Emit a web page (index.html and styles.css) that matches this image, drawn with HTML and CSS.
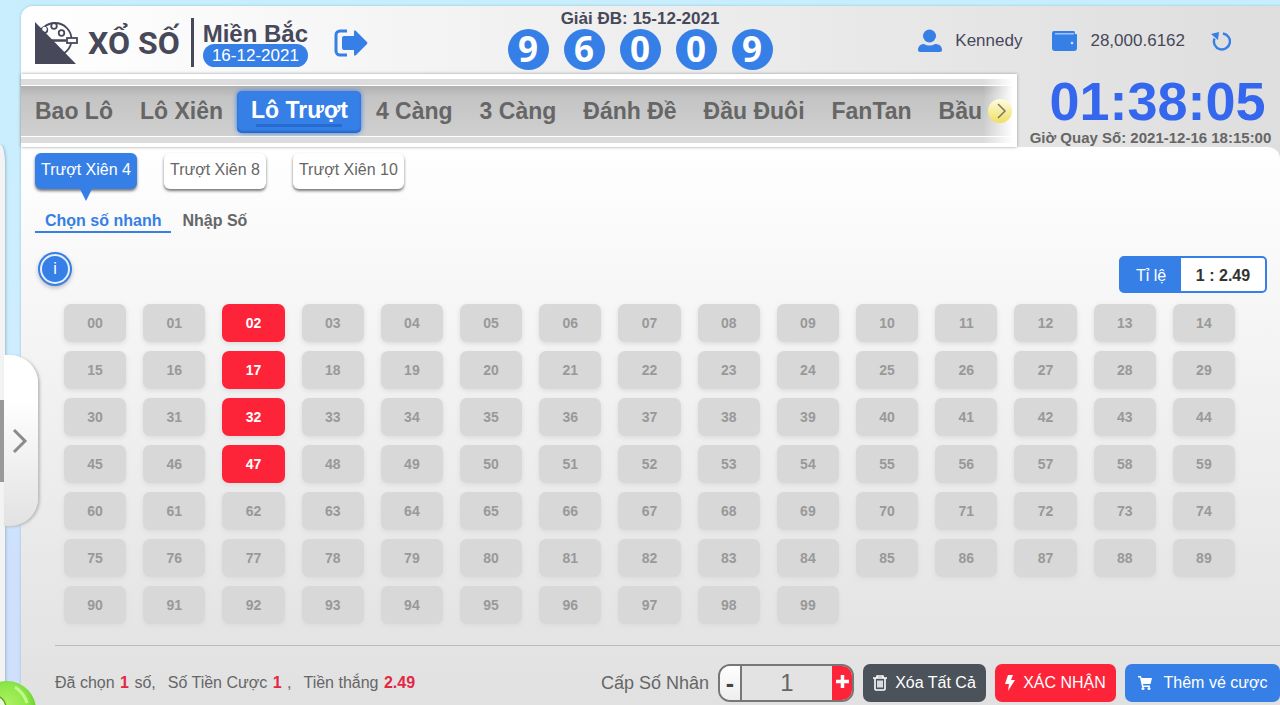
FILE: index.html
```html
<!DOCTYPE html>
<html lang="vi">
<head>
  <meta charset="utf-8">
  <title>Xổ Số Miền Bắc</title>
  <link rel="stylesheet" href="styles.css">
</head>
<body>
  <aside class="drawer">
    <div class="drawer-edge"></div>
    <button class="drawer-handle" aria-label="Mở menu">
      <svg width="16" height="26" viewBox="0 0 16 26"><path d="M2 2l11 11L2 24" fill="none" stroke="#8b8b8b" stroke-width="3"/></svg>
    </button>
    <svg class="green-ball" width="60" height="60" viewBox="0 0 60 60">
      <defs>
        <radialGradient id="ball" cx="50%" cy="40%" r="60%">
          <stop offset="0" stop-color="#b0f060"/>
          <stop offset="0.6" stop-color="#8be648"/>
          <stop offset="1" stop-color="#55c01c"/>
        </radialGradient>
      </defs>
      <circle cx="30" cy="30" r="29" fill="url(#ball)"/>
      <path d="M38 7c6 4 10 9 12 16" fill="none" stroke="#c4f790" stroke-width="3"/>
      <circle cx="16" cy="28" r="13" fill="#eaf8dc" stroke="#5aa82c" stroke-width="1.500"/>
    </svg>
  </aside>

  <main class="panel">
    <header class="header">
      <div class="brand">
        <svg width="43" height="42" viewBox="0 0 43 42">
          <g fill="#fff" stroke="#474859" stroke-width="1.800">
            <circle cx="20" cy="17.500" r="16.500"/>
            <circle cx="19" cy="4" r="2.800"/>
            <circle cx="9.500" cy="8" r="2.800"/>
            <circle cx="26.500" cy="11" r="2.800"/>
            <path d="M17 18.500h14" stroke-width="2.500"/>
            <rect x="32" y="16" width="10" height="5"/>
          </g>
          <path d="M0 0l41 42H0z" fill="#474859"/>
          <circle cx="9.500" cy="7" r="2.300" fill="#fff"/>
        </svg>
        <span class="brand-name">XỔ SỐ</span>
        <div class="region">
          <strong>Miền Bắc</strong>
          <span class="region-date">16-12-2021</span>
        </div>
        <a href="#" class="exit" aria-label="Thoát">
          <svg width="34" height="28" viewBox="0 0 34 28"><path d="M13 2H6a4 4 0 0 0-4 4v16a4 4 0 0 0 4 4h7" fill="none" stroke="#367fe6" stroke-width="3"/><path d="M8 9q0-2 2-2h10V3q0-3 2-1l11 11q1 1 0 2L22 26q-2 2-2-1v-4H10q-2 0-2-2z" fill="#367fe6"/></svg>
        </a>
      </div>

      <div class="result">
        <div class="result-title">Giải ĐB: 15-12-2021</div>
        <div class="balls">
          <span>9</span><span>6</span><span>0</span><span>0</span><span>9</span>
        </div>
      </div>

      <div class="account">
        <svg width="25" height="25" viewBox="0 0 25 25" fill="#367fe6"><circle cx="12.500" cy="7" r="6.500"/><path d="M1 21c0-4 3-6 6-6 4 2 7 2 11 0 4 0 7 2 7 6 0 1-1 2-2 2H3c-1 0-2-1-2-2z"/></svg>
        <span class="user">Kennedy</span>
        <svg width="25" height="22" viewBox="0 0 25 22"><path d="M2 1h20q1 0 1 3h1q1 0 1 1v13q0 3-3 3H3q-3 0-3-3V3q0-2 2-2z" fill="#367fe6"/><path d="M3 3h19v1.500H3z" fill="#9cc4fa"/><circle cx="20" cy="13" r="1.300" fill="#cfe2ff"/></svg>
        <span class="balance">28,000.6162</span>
        <button class="refresh" aria-label="Tải lại">
          <svg width="20" height="20" viewBox="0 0 20 20"><path d="M12 2.500a8 8 0 1 1-8.500 5" fill="none" stroke="#367fe6" stroke-width="2.400"/><path d="M0 3l8-2-1 8z" fill="#367fe6"/></svg>
        </button>
      </div>
    </header>

    <div class="games">
      <nav class="game-nav">
        <div class="game-list">
          <a href="#">Bao Lô</a>
          <a href="#">Lô Xiên</a>
          <a href="#" class="active">Lô Trượt</a>
          <a href="#">4 Càng</a>
          <a href="#">3 Càng</a>
          <a href="#">Đánh Đề</a>
          <a href="#">Đầu Đuôi</a>
          <a href="#">FanTan</a>
          <a href="#">Bầu</a>
        </div>
        <button class="next" aria-label="Tiếp">
          <svg width="10" height="16" viewBox="0 0 10 16"><path d="M1 1l7 7-7 7" fill="none" stroke="#777" stroke-width="1.500"/></svg>
        </button>
      </nav>
      <div class="clock">
        <div class="clock-time">01:38:05</div>
        <div class="clock-draw">Giờ Quay Số: 2021-12-16 18:15:00</div>
      </div>
    </div>

    <section class="content">
      <div class="types">
        <button class="active">Trượt Xiên 4</button>
        <button>Trượt Xiên 8</button>
        <button>Trượt Xiên 10</button>
      </div>

      <div class="modes">
        <a href="#" class="active">Chọn số nhanh</a>
        <a href="#">Nhập Số</a>
      </div>

      <div class="info-row">
        <button class="info" aria-label="Thông tin"><span>i</span></button>
        <div class="rate">
          <span class="rate-label">Tỉ lệ</span>
          <span class="rate-value">1 : 2.49</span>
        </div>
      </div>

      <div class="numbers" id="numbers"></div>

      <footer class="bet-bar">
        <p class="summary">
          <span>Đã chọn <b>1</b> số,</span>
          <span>Số Tiền Cược <b>1</b> ,</span>
          <span>Tiền thắng <b>2.49</b></span>
        </p>
        <label class="multiplier-label" for="multiplier">Cấp Số Nhân</label>
        <div class="stepper">
          <button class="minus" aria-label="Giảm">-</button>
          <input id="multiplier" type="text" value="1">
          <button class="plus" aria-label="Tăng">
            <svg width="13" height="13" viewBox="0 0 13 13"><path d="M6.500 0v13M0 6.500h13" stroke="#fff" stroke-width="3.500"/></svg>
          </button>
        </div>
        <button class="action clear">
          <svg width="14" height="16" viewBox="0 0 14 16" fill="none" stroke="#fff" stroke-width="1.600"><path d="M0 3h14M4 3V1h6v2M2 3v11q0 1 1 1h8q1 0 1-1V3M5 5.500v7M7 5.500v7M9 5.500v7"/></svg>
          Xóa Tất Cả
        </button>
        <button class="action confirm">
          <svg width="10" height="16" viewBox="0 0 10 16" fill="#fff"><path d="M3 0h5L6 5h4L3 16l1-7H0z"/></svg>
          XÁC NHẬN
        </button>
        <button class="action add">
          <svg width="14" height="14" viewBox="0 0 14 14" fill="#fff"><path d="M0 0h3l.5 2H14l-1.500 6H5l.3 1.500H12V11H4L2 1.500H0z"/><circle cx="5" cy="12.500" r="1.500"/><circle cx="11" cy="12.500" r="1.500"/></svg>
          Thêm vé cược
        </button>
      </footer>
    </section>
  </main>

  <script>
    const picked = [2, 17, 32, 47];
    const numbers = document.getElementById('numbers');

    for (let i = 0; i < 100; i++) {
      const button = document.createElement('button');
      button.textContent = String(i).padStart(2, '0');
      if (picked.includes(i)) {
        button.className = 'picked';
      }
      button.addEventListener('click', () => button.classList.toggle('picked'));
      numbers.appendChild(button);
    }
  </script>
</body>
</html>
```
FILE: styles.css
```css
* {
  box-sizing: border-box;
}
body {
  margin: 0;
  min-height: 100vh;
  display: flex;
  overflow: hidden;
  font-family: "Liberation Sans", Arial, sans-serif;
  font-size: 16px;
  color: #666;
  background: linear-gradient(#c8eefe, #cfedff 60%, #cfdffc 80%);
}
button,
input {
  font-family: inherit;
  font-size: inherit;
  border: none;
  padding: 0;
}
button {
  cursor: pointer;
}
a {
  color: inherit;
  text-decoration: none;
}
svg {
  flex: none;
}

/* left drawer */
.drawer {
  position: relative;
  flex: none;
  width: 21px;
}
.drawer-edge {
  position: absolute;
  top: 145px;
  bottom: 0;
  left: 0;
  width: 5px;
  background: #f3f3f3;
  border-top-right-radius: 6px 20px;
  box-shadow: 1px 0 3px #9bb9cc;
}
.drawer-handle {
  position: absolute;
  z-index: 2;
  top: 355px;
  left: 4px;
  width: 34px;
  height: 171px;
  border-radius: 0 28px 28px 0;
  background: linear-gradient(#fff 25%, #e2e2e2);
  box-shadow: 2px 1px 3px #bbb;
  display: flex;
  align-items: center;
  padding-left: 8px;
}
.drawer-handle::before {
  content: "";
  position: absolute;
  left: -4px;
  top: 45px;
  width: 4px;
  height: 82px;
  background: #999;
}
.green-ball {
  position: absolute;
  z-index: 2;
  left: -23px;
  bottom: -35px;
}

/* header */
.panel {
  flex: 1;
  min-width: 0;
  margin-top: 6px;
  display: flex;
  flex-direction: column;
  border-top-left-radius: 12px;
  background: linear-gradient(90deg, #fff, #f1f1f1 40%, #dedede);
  box-shadow: 0 0 3px #9bc0d2;
}
.header {
  height: 68px;
  padding: 0 35px 0 14px;
  display: grid;
  grid-template-columns: 1fr auto 1fr;
}
.brand {
  display: flex;
  align-items: center;
  padding-top: 5px;
  color: #474859;
}
.brand-name {
  margin-left: 10px;
  font: 700 32px/40px Roboto, sans-serif;
}
.region {
  margin-left: 11px;
  padding: 6px 0 0 9px;
  border-left: 3px solid #474859;
  display: flex;
  flex-direction: column;
  align-items: center;
}
.region strong {
  font-size: 24px;
  line-height: 20px;
}
.region-date {
  width: 100%;
  border-radius: 12px;
  background: #367fe6;
  color: #fff;
  font-size: 17px;
  line-height: 23px;
  text-align: center;
}
.exit {
  margin-left: 26px;
}
.exit svg {
  display: block;
}
.result {
  padding-top: 3px;
  text-align: center;
}
.result-title {
  color: #474859;
  font-size: 17px;
  font-weight: bold;
  line-height: 20px;
}
.balls {
  display: flex;
  gap: 15px;
}
.balls span {
  width: 41px;
  height: 41px;
  border-radius: 50%;
  background: #367fe6;
  color: #fff;
  font: 700 35px/40px "Noto Sans", sans-serif;
}
.account {
  display: flex;
  align-items: center;
  justify-content: flex-end;
  padding: 2px 14px 0 0;
  color: #474859;
  font-size: 17px;
}
.user {
  margin: 0 30px 0 13px;
}
.balance {
  margin: 0 26px 0 13px;
}
.refresh {
  background: none;
}
.refresh svg {
  display: block;
}

/* game menu and clock */
.games {
  display: flex;
}
.game-nav {
  position: relative;
  flex: 1;
  min-width: 0;
  padding: 5px 4px 4px 0;
  background: #fff;
  box-shadow: 0 0 3px #999;
}
.game-list {
  display: flex;
  align-items: center;
  height: 64px;
  overflow: hidden;
  background: linear-gradient(#dcdcdc 6px, #fff 6px, #fff 7px, #b0b0b0 7px, #c4c4c4 18px, #d0d0d0 57px, #fff 57px, #fff 58px, #dcdcdc 58px);
}
.game-list a {
  padding: 0 13px 0 14px;
  font-size: 23px;
  font-weight: bold;
  line-height: 36px;
  white-space: nowrap;
}
.game-list .active {
  position: relative;
  z-index: 1;
  height: 42px;
  margin: 2px 1px 0;
  border-radius: 5px;
  background: #367fe6;
  color: #fff;
  line-height: 39px;
  box-shadow: 0 0 5px #367fe6, inset 0 -2px 2px #2869c6;
}
.game-list .active::after {
  content: "";
  position: absolute;
  left: 19px;
  right: 19px;
  bottom: 6px;
  height: 3px;
  background: #266bd0;
}
.game-nav::after {
  content: "";
  position: absolute;
  top: 0;
  right: 4px;
  bottom: 0;
  width: 30px;
  background: linear-gradient(90deg, transparent, #fff);
}
.next {
  position: absolute;
  z-index: 1;
  top: 25px;
  right: 5px;
  width: 24px;
  height: 24px;
  border-radius: 50%;
  background: linear-gradient(#fffce0, #efe05d);
  display: flex;
  align-items: center;
  justify-content: center;
  padding-left: 3px;
}
.clock {
  width: 263px;
  padding-left: 4px;
  text-align: center;
  font-weight: bold;
  white-space: nowrap;
}
.clock-time {
  padding-left: 14px;
  color: #3567ee;
  font-size: 54px;
  line-height: 54px;
}
.clock-draw {
  font-size: 15px;
  line-height: 19px;
}

/* betting area */
.content {
  flex: 1;
  padding: 6px 0 0 14px;
  border-top-right-radius: 12px;
  background: linear-gradient(#fff, #f8f8f8 22%, #e8e8e8 75%, #e1e1e1);
}
.types {
  display: flex;
  gap: 27px;
}
.types button {
  position: relative;
  height: 36px;
  padding: 0 6px 2px;
  border-radius: 6px;
  background: #fff;
  color: #666;
  box-shadow: 0 2px 3px #777;
}
.types .active {
  background: #367fe6;
  color: #fff;
}
.types .active::after {
  content: "";
  position: absolute;
  top: 36px;
  left: 50%;
  margin-left: -6px;
  border: 6px solid transparent;
  border-top: 12px solid #367fe6;
  border-bottom: 0;
}
.modes {
  display: flex;
  gap: 11px;
  margin-top: 22px;
  font-weight: bold;
  line-height: 20px;
}
.modes .active {
  padding: 0 10px;
  color: #367fe6;
  border-bottom: 2px solid #367fe6;
}
.info-row {
  display: flex;
  justify-content: space-between;
  margin: 23px 13px 0 3px;
  height: 37px;
}
.info {
  width: 34px;
  height: 34px;
  margin-top: -4px;
  padding: 2px;
  border-radius: 50%;
  background: #367fe6;
  color: #fff;
  box-shadow: 0 2px 4px #bbb;
}
.info span {
  display: block;
  border: 2px solid #e6f0ff;
  border-radius: 50%;
  line-height: 26px;
}
.rate {
  display: flex;
  border: 2px solid #367fe6;
  border-radius: 5px;
  background: #fff;
  line-height: 35px;
}
.rate-label {
  width: 60px;
  background: #367fe6;
  color: #fff;
  text-align: center;
}
.rate-value {
  width: 84px;
  color: #333;
  font-weight: bold;
  text-align: center;
}
.numbers {
  display: grid;
  grid-template-columns: repeat(15, 1fr);
  gap: 9px 17px;
  margin: 11px 45px 0 29px;
}
.numbers button {
  height: 38px;
  border-radius: 7px;
  background: #d8d8d8;
  color: #999;
  font-size: 14px;
  font-weight: bold;
  box-shadow: 0 2px 5px #dcdcdc;
}
.numbers .picked {
  background: #fd2439;
  color: #fff;
}

/* bottom bar */
.bet-bar {
  display: flex;
  align-items: center;
  gap: 9px;
  margin: 21px 0 0 20px;
  padding: 18px 0 3px;
  border-top: 1px solid #bbb;
}
.summary {
  flex: 1;
  display: flex;
  gap: 12px;
  margin: 0;
  white-space: nowrap;
}
.summary b {
  margin: 0 1px;
  color: #e32744;
}
.multiplier-label {
  font-size: 18px;
  white-space: nowrap;
}
.stepper {
  display: flex;
  width: 136px;
  height: 38px;
  border: 2px solid #777;
  border-radius: 12px;
  overflow: hidden;
}
.stepper .minus {
  width: 20px;
  background: linear-gradient(#fff, #eee);
  color: #444;
  font-size: 25px;
  font-weight: bold;
}
.stepper input {
  flex: 1;
  min-width: 0;
  border-left: 2px solid #777;
  background: #e3e3e3;
  color: #666;
  font-size: 24px;
  text-align: center;
}
.stepper .plus {
  width: 20px;
  background: #fd2439;
}
.action {
  display: flex;
  align-items: center;
  justify-content: center;
  gap: 8px;
  height: 38px;
  border-radius: 7px;
  color: #fff;
  font-size: 16px;
  white-space: nowrap;
}
.clear {
  width: 123px;
  background: #4b5259;
}
.confirm {
  width: 121px;
  background: #fd2439;
}
.add {
  width: 155px;
  gap: 12px;
  background: #367fe6;
}
```
